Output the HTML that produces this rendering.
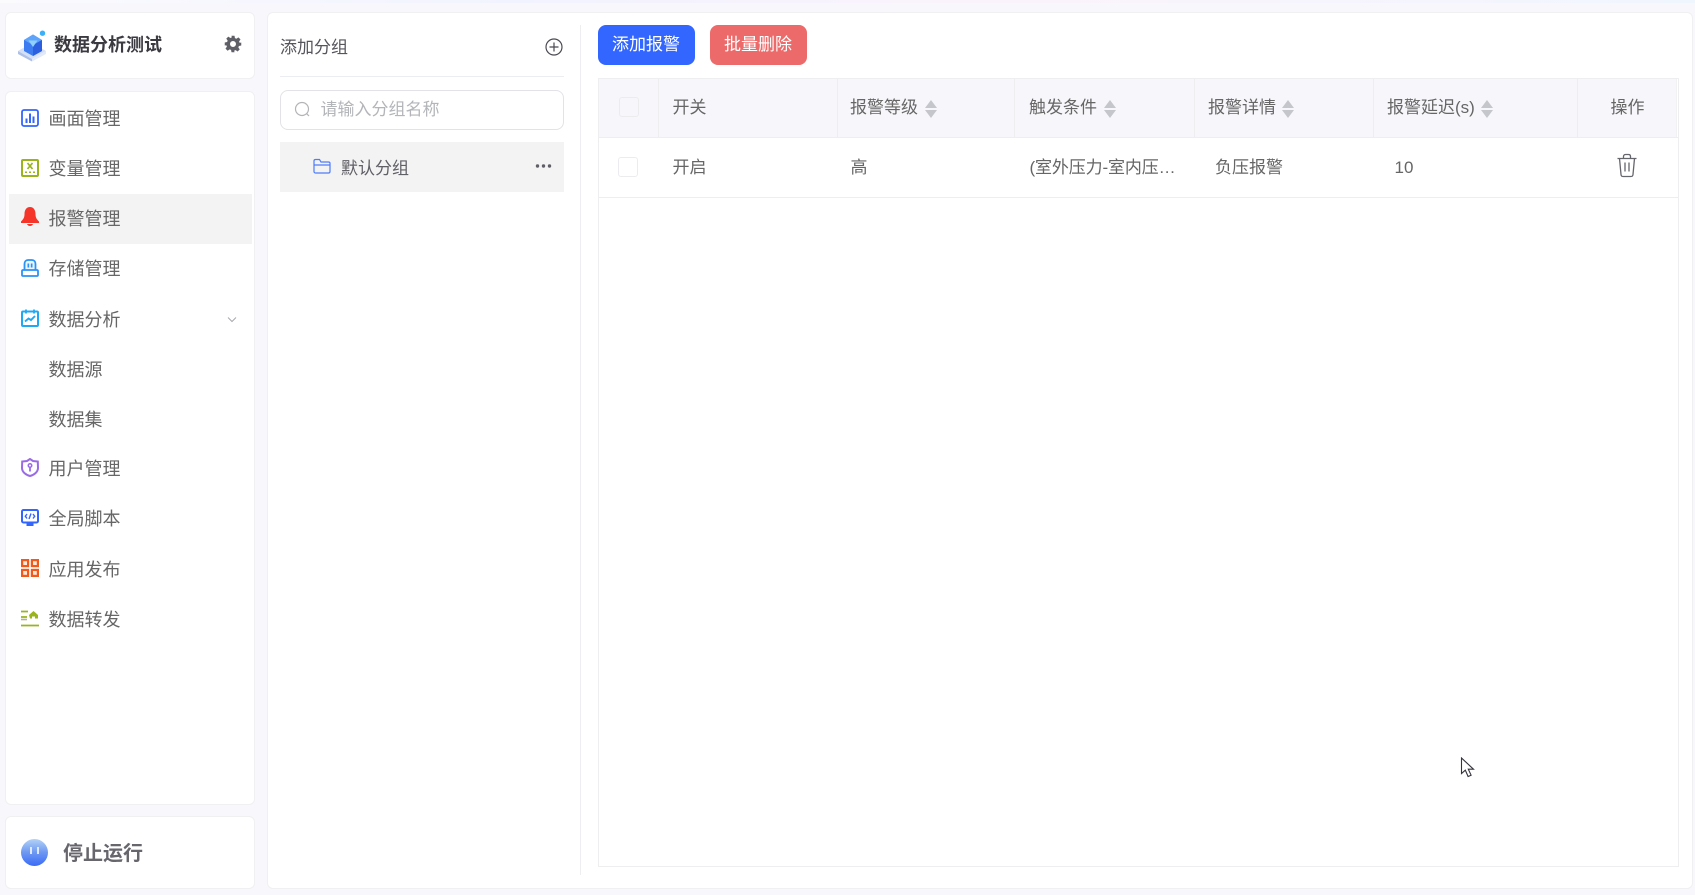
<!DOCTYPE html>
<html lang="zh"><head><meta charset="utf-8"><title>报警管理</title>
<style>
*{box-sizing:border-box}
html,body{margin:0;padding:0;width:1695px;height:895px;overflow:hidden;background:#f7f7fc}
body{font-family:"Liberation Sans","Noto Sans CJK SC",sans-serif;color:#666;position:relative}
.a{position:absolute}
.card{position:absolute;background:#fff;border:1px solid #f0f0f3;border-radius:6px}
.t{position:absolute;font-size:18px;line-height:24px;white-space:nowrap;color:#666}
.s{position:absolute;font-size:17px;line-height:24px;white-space:nowrap;color:#666}
svg{position:absolute;display:block}
.v{position:absolute;top:79px;width:1px;height:58px;background:#eeeef1}
.cb{position:absolute;width:20px;height:20px;border:1px solid #ececee;border-radius:3px;background:#fff}
</style></head><body>
<div class="a" style="left:0;top:0;width:1695px;height:3px;background:linear-gradient(90deg,#fbfbfe,#f1f3fe 30%,#fbf3fb 60%,#f0f6fe)"></div>

<div class="card" style="left:5px;top:12px;width:250px;height:67px"></div>
<div class="card" style="left:5px;top:91px;width:250px;height:714px"></div>
<div class="card" style="left:5px;top:816px;width:250px;height:73px"></div>
<div class="card" style="left:267px;top:12px;width:1426px;height:877px"></div>

<svg style="left:18px;top:30px" width="30" height="32" viewBox="0 0 30 32">
<path d="M0 21 14 13 28 21 14 29Z" fill="#d3def7"/><path d="M0 21v3l14 7.500V29z" fill="#aebfe8"/><path d="M28 21v3l-14 7.500V29z" fill="#e2e9f9"/>
<path d="M6 10 15 4.500 24 10v11l-9 5-9-5z" fill="#3c7bf0"/><path d="M6 10 15 4.500 24 10 15 15z" fill="#5fa4fb"/><path d="M15 15v11l9-5V10z" fill="#2c5fe0"/>
<path d="M10.500 10.500h9L15 17z" fill="#8fd0ff"/><circle cx="24.500" cy="3.200" r="2.700" fill="#3ab0f8"/></svg>
<div class="t" style="left:54px;top:33px;font-weight:700;color:#3a3a40">数据分析测试</div>
<svg style="left:224px;top:35px" width="18" height="18" viewBox="0 0 24 24"><path fill="#5f5f68" fill-rule="evenodd" d="M10 1h4l.6 3.200 1.900.8 2.700-1.900 2.800 2.800-1.900 2.700.8 1.900L23 10v4l-3.100.6-.8 1.900 1.900 2.700-2.800 2.800-2.700-1.900-1.900.8L14 23h-4l-.6-3.100-1.900-.8-2.700 1.900-2.800-2.800 1.900-2.700-.8-1.900L1 14v-4l3.100-.6.8-1.900L3 4.900l2.800-2.800 2.700 1.900 1.900-.8zM12 8a4 4 0 1 0 0 8 4 4 0 0 0 0-8z"/></svg>

<div class="a" style="left:9px;top:194px;width:243px;height:50px;background:#f3f3f3"></div>

<svg style="left:21px;top:109px" width="18" height="18" viewBox="0 0 18 18"><rect x="1" y="1" width="16" height="16" rx="2" fill="none" stroke="#3366ff" stroke-width="1.800"/><path d="M4.500 9.500h2V14h-2zM8 4.500h2V14H8zM11.500 7.500h2V14h-2z" fill="#3366ff"/></svg>
<div class="t" style="left:48.500px;top:107px">画面管理</div>
<svg style="left:21px;top:159px" width="18" height="18" viewBox="0 0 18 18"><rect x="1" y="1" width="16" height="16" rx="1" fill="none" stroke="#9ab41c" stroke-width="2"/><path d="M6.500 4 11.500 10M11.500 4 6.500 10" stroke="#9ab41c" stroke-width="1.700"/><path d="M4 12.500h2V14H4zM8 12.500h2V14H8zM12 12.500h2V14h-2z" fill="#9ab41c"/></svg>
<div class="t" style="left:48.500px;top:157px">变量管理</div>
<svg style="left:21px;top:207px" width="18" height="19" viewBox="0 0 18 19"><path d="M9 0C5.500 0 3.500 3 3.500 7c0 3.500-1 5-3.500 7.500v1.500h18v-1.500C15.500 12 14.500 10.500 14.500 7 14.500 3 12.500 0 9 0z" fill="#f5352a"/><path d="M6 17h6c-.5 1.200-1.500 2-3 2s-2.500-.8-3-2z" fill="#f5352a"/></svg>
<div class="t" style="left:48.500px;top:207px">报警管理</div>
<svg style="left:21px;top:259px" width="18" height="18" viewBox="0 0 18 18"><path d="M3.500 11.500V5C3.500 2.500 5 1 7 1h4c2 0 3.500 1.500 3.500 4v6.500" fill="#eaf5ff" stroke="#2a93f5" stroke-width="1.800"/><rect x="1" y="11" width="16" height="6" rx="1" fill="#fff" stroke="#2a93f5" stroke-width="1.800"/><path d="M6.500 4.500h1.700v4H6.500zM9.800 4.500h1.700v4H9.800z" fill="#2a93f5"/></svg>
<div class="t" style="left:48.500px;top:257px">存储管理</div>
<svg style="left:21px;top:309px" width="18" height="18" viewBox="0 0 18 18"><rect x="1" y="2.500" width="16" height="14.500" rx="1" fill="none" stroke="#1fa9f5" stroke-width="2"/><path d="M5 .5v4M13 .5v4" stroke="#1fa9f5" stroke-width="1.800"/><path d="M4 12.500 7.500 9.500l2.500 1.500L14 7" fill="none" stroke="#1fa9f5" stroke-width="1.900"/></svg>
<div class="t" style="left:48.500px;top:308px">数据分析</div>
<svg style="left:227px;top:316px" width="10" height="7" viewBox="0 0 10 7"><path d="M1 1.500 5 5.500 9 1.500" fill="none" stroke="#a8a8ae" stroke-width="1"/></svg>
<div class="t" style="left:48.500px;top:358px">数据源</div>
<div class="t" style="left:48.500px;top:408px">数据集</div>
<svg style="left:21px;top:458px" width="18" height="19" viewBox="0 0 18 19"><path d="M9 1 6 3 1.200 3.500 1 10c0 4 4 7 8 8 4-1 8-4 8-8l-.2-6.500L12 3z" fill="none" stroke="#9a6be6" stroke-width="2"/><circle cx="9" cy="7.500" r="2.500" fill="#9a6be6"/><path d="M9 9V13.500" stroke="#9a6be6" stroke-width="1.800"/><circle cx="9" cy="7.500" r="1" fill="#fff"/></svg>
<div class="t" style="left:48.500px;top:457px">用户管理</div>
<svg style="left:21px;top:509px" width="18" height="18" viewBox="0 0 18 18"><rect x="1" y="1" width="16" height="12.500" rx="1.500" fill="none" stroke="#3366ff" stroke-width="2"/><path d="M5.500 14.500h7V17h-7z" fill="#3366ff"/><path d="M6 5 4.300 7.200 6 9.500M12 5l1.700 2.200L12 9.500M10 4.500 8 10" fill="none" stroke="#3366ff" stroke-width="1.400"/></svg>
<div class="t" style="left:48.500px;top:507px">全局脚本</div>
<svg style="left:21px;top:559px" width="18" height="18" viewBox="0 0 18 18"><g fill="#fde7d8" stroke="#f4591c" stroke-width="2.200"><rect x="1.100" y="1.100" width="6" height="6"/><rect x="10.900" y="1.100" width="6" height="6"/><rect x="1.100" y="10.900" width="6" height="6"/><rect x="10.900" y="10.900" width="6" height="6"/></g></svg>
<div class="t" style="left:48.500px;top:558px">应用发布</div>
<svg style="left:21px;top:610px" width="18" height="17" viewBox="0 0 18 17"><path d="M0 1.500h7M0 7h6M0 15.500h18" stroke="#9ab41c" stroke-width="1.800"/><path d="M8 5 12.500 1 17 5v3.500H14V6.500h-3V8.500H9z" fill="#9ab41c"/><path d="M0 9.500h6" stroke="#b7b08a" stroke-width="1.600"/></svg>
<div class="t" style="left:48.500px;top:608px">数据转发</div>

<div class="a" style="left:21px;top:839px;width:27px;height:27px;border-radius:50%;background:linear-gradient(180deg,#b3d2f6,#6d98f2 50%,#3b6bf8)"></div>
<div class="a" style="left:30px;top:847px;width:2px;height:7px;background:#dfe9fb"></div>
<div class="a" style="left:37px;top:847px;width:2px;height:7px;background:#dfe9fb"></div>
<div class="a" style="left:63px;top:841px;font-size:20px;line-height:26px;font-weight:700;color:#66666c;white-space:nowrap">停止运行</div>

<div class="s" style="left:280px;top:36px;color:#55555c">添加分组</div>
<svg style="left:545px;top:38px" width="18" height="18" viewBox="0 0 18 18"><circle cx="9" cy="9" r="8" fill="none" stroke="#4a4a52" stroke-width="1.200"/><path d="M9 4.500v9M4.500 9h9" stroke="#4a4a52" stroke-width="1.200"/></svg>
<div class="a" style="left:280px;top:76px;width:284px;height:1px;background:#ecedf0"></div>
<div class="a" style="left:580px;top:25px;width:1px;height:850px;background:#eeeef1"></div>
<div class="a" style="left:280px;top:90px;width:284px;height:40px;border:1px solid #e3e3e7;border-radius:8px;background:#fff"></div>
<svg style="left:294px;top:101px" width="17" height="17" viewBox="0 0 17 17"><circle cx="8" cy="8" r="6.500" fill="none" stroke="#b4b4b8" stroke-width="1.200"/><path d="M12.800 12.800 15 15" stroke="#b4b4b8" stroke-width="1.200"/></svg>
<div class="s" style="left:320.500px;top:98px;color:#b3b5b9">请输入分组名称</div>
<div class="a" style="left:280px;top:142px;width:284px;height:50px;background:#f3f3f3"></div>
<svg style="left:313px;top:158px" width="18" height="17" viewBox="0 0 18 17"><path d="M1 13.500V3c0-1 .6-1.500 1.500-1.500h4L8 4h7.500c.8 0 1.500.5 1.500 1.500v8c0 1-.7 1.500-1.500 1.500h-13C1.600 15 1 14.500 1 13.500zM1 7h16" fill="none" stroke="#4f7cf7" stroke-width="1.200"/></svg>
<div class="s" style="left:341px;top:157px;color:#5f5f66">默认分组</div>
<svg style="left:534px;top:163px" width="19" height="6" viewBox="0 0 19 6"><circle cx="3.500" cy="3" r="1.700" fill="#5f5f68"/><circle cx="9.500" cy="3" r="1.700" fill="#5f5f68"/><circle cx="15.500" cy="3" r="1.700" fill="#5f5f68"/></svg>

<div class="a" style="left:598px;top:25px;width:97px;height:40px;border-radius:8px;background:#3366ff"></div>
<div class="s" style="left:612px;top:33px;color:#fff">添加报警</div>
<div class="a" style="left:710px;top:25px;width:97px;height:40px;border-radius:8px;background:#ec6a6a"></div>
<div class="s" style="left:724px;top:33px;color:#fff">批量删除</div>

<div class="a" style="left:598px;top:78px;width:1081px;height:789px;border:1px solid #eeeef1;background:#fff"></div>
<div class="a" style="left:599px;top:79px;width:1078px;height:58px;background:#f7f7fb"></div>
<div class="a" style="left:599px;top:137px;width:1079px;height:1px;background:#eeeef1"></div>
<div class="a" style="left:599px;top:197px;width:1079px;height:1px;background:#eeeef1"></div>
<div class="v" style="left:658px"></div><div class="v" style="left:837px"></div><div class="v" style="left:1014px"></div><div class="v" style="left:1194px"></div><div class="v" style="left:1373px"></div><div class="v" style="left:1577px"></div><div class="v" style="left:1676px;background:#f1f1f4"></div>
<div class="cb" style="left:619px;top:97px;background:#f7f7fb"></div>
<div class="cb" style="left:618px;top:157px"></div>
<div class="s" style="left:672.500px;top:96px">开关</div>
<div class="s" style="left:850px;top:96px">报警等级</div>
<div class="s" style="left:1029px;top:96px">触发条件</div>
<div class="s" style="left:1208px;top:96px">报警详情</div>
<div class="s" style="left:1387px;top:96px">报警延迟(s)</div>
<div class="s" style="left:1610.500px;top:96px">操作</div>
<svg style="left:925px;top:100px" width="12" height="18" viewBox="0 0 12 18"><path d="M6 0 12 8H0zM0 10h12L6 18z" fill="#c4c6cb"/></svg>
<svg style="left:1104px;top:100px" width="12" height="18" viewBox="0 0 12 18"><path d="M6 0 12 8H0zM0 10h12L6 18z" fill="#c4c6cb"/></svg>
<svg style="left:1281.500px;top:100px" width="12" height="18" viewBox="0 0 12 18"><path d="M6 0 12 8H0zM0 10h12L6 18z" fill="#c4c6cb"/></svg>
<svg style="left:1481px;top:100px" width="12" height="18" viewBox="0 0 12 18"><path d="M6 0 12 8H0zM0 10h12L6 18z" fill="#c4c6cb"/></svg>
<div class="s" style="left:672.500px;top:156px">开启</div>
<div class="s" style="left:850.500px;top:156px">高</div>
<div class="s" style="left:1029.500px;top:156px;letter-spacing:-.13px">(室外压力-室内压…</div>
<div class="s" style="left:1215px;top:156px">负压报警</div>
<div class="s" style="left:1394.500px;top:156px">10</div>
<svg style="left:1616px;top:153px" width="22" height="25" viewBox="0 0 22 25"><path d="M1.500 5.500h19M7.500 5.500V3.500C7.500 2 8.500 1.500 9.500 1.500h3c1 0 2 .5 2 2v2M3.500 5.500 5 21.500c.1 1.300 1 2 2 2h8c1 0 1.900-.7 2-2l1.500-16M9 9.500v9M13 9.500v9" fill="none" stroke="#65656c" stroke-width="1.300"/></svg>
<svg style="left:1460px;top:757px" width="15" height="21" viewBox="0 0 15 21"><path d="M1.500 1v15.500l3.800-3.300 2.800 6.300 3-1.300-2.800-6H13.500z" fill="#fff" stroke="#33333a" stroke-width="1.100"/></svg>
</body></html>
